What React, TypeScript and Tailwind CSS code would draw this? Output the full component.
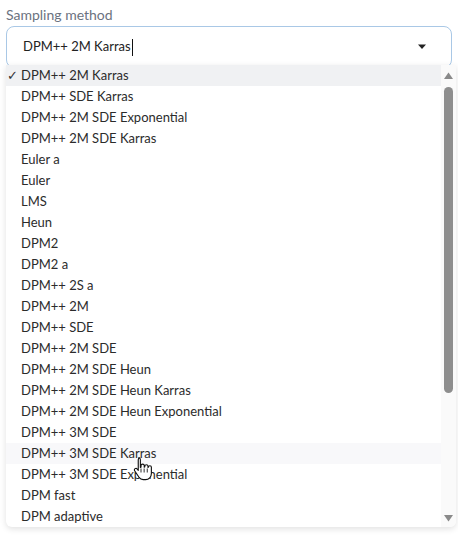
import React from "react";

const items = [
  "DPM++ 2M Karras",
  "DPM++ SDE Karras",
  "DPM++ 2M SDE Exponential",
  "DPM++ 2M SDE Karras",
  "Euler a",
  "Euler",
  "LMS",
  "Heun",
  "DPM2",
  "DPM2 a",
  "DPM++ 2S a",
  "DPM++ 2M",
  "DPM++ SDE",
  "DPM++ 2M SDE",
  "DPM++ 2M SDE Heun",
  "DPM++ 2M SDE Heun Karras",
  "DPM++ 2M SDE Heun Exponential",
  "DPM++ 3M SDE",
  "DPM++ 3M SDE Karras",
  "DPM++ 3M SDE Exponential",
  "DPM fast",
  "DPM adaptive",
];

function HandCursor() {
  return (
    <svg width="20" height="25" viewBox="0 0 16 20" className="absolute left-[133px] top-[456px]">
      <path
        d="M4.5 1.5c.8 0 1.4.6 1.4 1.4v6.2l.5-.1V7.8c0-.8.6-1.3 1.3-1.3s1.3.5 1.3 1.3v1.1l.4-.1v-.5c0-.8.6-1.3 1.3-1.3s1.3.5 1.3 1.3v.8l.3-.1c0-.7.6-1.2 1.2-1.2.7 0 1.2.5 1.2 1.2v5c0 2.8-2 4.9-4.6 4.9H8.2c-1.5 0-2.6-.7-3.4-1.9L1.3 11.8c-.4-.6-.2-1.3.4-1.7.5-.3 1.2-.2 1.6.3l.9 1.1V2.9c0-.8.6-1.4 1.3-1.4z"
        fill="#fff"
        stroke="#111"
        strokeWidth="0.9"
        strokeLinejoin="round"
      />
      <path d="M6.4 10v3.2M8.9 10v3.2M11.4 10v3.2" stroke="#111" strokeWidth="0.7" />
    </svg>
  );
}

export default function App() {
  return (
    <div
      className="relative w-[458px] h-[539px] bg-white overflow-hidden"
      style={{ fontFamily: '"Lato", "Noto Sans", sans-serif' }}
    >
      <div className="absolute right-0 top-[150px] w-[3px] h-[8px] border-l border-gray-300" />
      <div className="absolute right-0 top-[205px] w-[3px] h-[8px] border-l border-gray-300" />
      <div className="absolute right-0 top-[258px] w-[3px] h-[8px] border-l border-gray-300" />
      <div className="px-[6px] pt-[5px]">
        <div className="text-[14px] leading-[20px] text-[#6b7280]">Sampling method</div>
        <div className="mt-[1px] h-[42px] rounded-[8px] border border-[#a9c8e6] bg-white flex items-center pl-[16px] pr-[24px]">
          <span className="text-[13px] text-[#222]">DPM++ 2M Karras</span>
          <span className="w-px h-[17px] bg-[#111] ml-[1px]" />
          <div className="flex-1" />
          <svg width="10" height="6" viewBox="0 0 10 6">
            <path d="M1 0.5h8L5 5z" fill="#222" />
          </svg>
        </div>
      </div>
      <div className="absolute left-[6px] top-[65px] w-[450px] h-[462px] bg-white rounded-b-[6px] shadow-[0_2px_6px_rgba(0,0,0,0.12)] flex overflow-hidden">
        <div className="flex-1 flex flex-col">
          {items.map((it, i) => (
            <div
              key={it}
              className={
                "h-[21px] flex items-center text-[13px] text-[#2b2b2b] " +
                (i === 0 ? "bg-[#f0f1f3]" : i === 18 ? "bg-[#f8f8fa]" : "")
              }
            >
              <span className="w-[15px] pl-[1px] text-[13px] text-[#333]">{i === 0 ? "✓" : ""}</span>
              <span>{it}</span>
            </div>
          ))}
        </div>
        <div className="w-[15px] bg-[#fafafa] flex flex-col items-center pt-[7px] pb-[5px]">
          <svg width="9" height="7" viewBox="0 0 9 7">
            <path d="M0 7L4.5 0.5 9 7z" fill="#8a8a8a" />
          </svg>
          <div className="mt-[8px] w-[9px] h-[306px] rounded-full bg-[#8e8e8e]" />
          <div className="flex-1" />
          <svg width="9" height="7" viewBox="0 0 9 7">
            <path d="M0 0L4.5 6.5 9 0z" fill="#8a8a8a" />
          </svg>
        </div>
      </div>
      <HandCursor />
    </div>
  );
}
